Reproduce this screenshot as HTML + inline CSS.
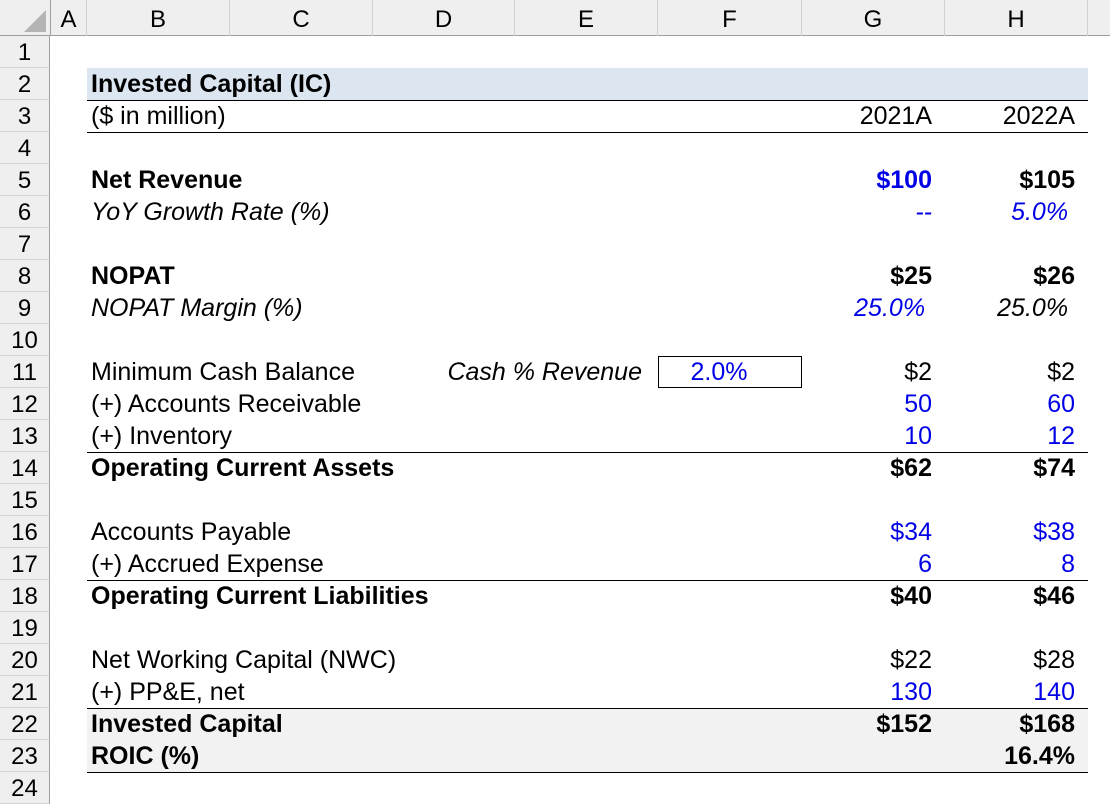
<!DOCTYPE html>
<html><head><style>
html,body{margin:0;width:1110px;height:808px;overflow:hidden}
body{background:#fff;font-family:"Liberation Sans",Arial,sans-serif;font-size:25px;color:#000;position:relative}
.a{position:absolute;line-height:32px;white-space:nowrap}
.hd{position:absolute;top:0;left:0;width:1110px;height:36px;background:#efefef;border-bottom:1px solid #9e9e9e;box-sizing:border-box}
.ch{position:absolute;top:0;height:36px;line-height:40px;text-align:center;border-right:1px solid #d0d0d0;box-sizing:border-box;font-size:24px}
.rh{position:absolute;left:0;width:50px;height:32px;line-height:34px;text-align:center;background:#efefef;border-bottom:1px solid #d4d4d4;border-right:1px solid #9e9e9e;box-sizing:border-box;font-size:24px}
.b{font-weight:bold}.i{font-style:italic}.bl{color:#0000e6}
.r{text-align:right}
.g{left:782px;width:150px;text-align:right}
.h{left:925px;width:150px;text-align:right}
.L{left:91px}
.ln{position:absolute;left:87px;width:1001px;height:1px;background:#000}
</style></head><body>
<div class="hd"></div>
<svg style="position:absolute;left:24px;top:10px" width="22" height="22"><polygon points="22,0 22,22 0,22" fill="#b4b4b4"/></svg>
<div class="ch" style="left:50px;width:37px;border-left:1px solid #9e9e9e">A</div>
<div class="ch" style="left:87px;width:143px">B</div>
<div class="ch" style="left:230px;width:143px">C</div>
<div class="ch" style="left:373px;width:142px">D</div>
<div class="ch" style="left:515px;width:143px">E</div>
<div class="ch" style="left:658px;width:144px">F</div>
<div class="ch" style="left:802px;width:143px">G</div>
<div class="ch" style="left:945px;width:143px">H</div>

<div style="position:absolute;left:87px;top:68px;width:1001px;height:32px;background:#dce6f1"></div>
<div style="position:absolute;left:87px;top:708px;width:1001px;height:64px;background:#f2f2f2"></div>
<div class="ln" style="top:100px"></div>
<div class="ln" style="top:132px"></div>
<div class="ln" style="top:452px"></div>
<div class="ln" style="top:580px"></div>
<div class="ln" style="top:708px"></div>
<div class="ln" style="top:772px"></div>
<div style="position:absolute;left:658px;top:356px;width:144px;height:32px;border:1px solid #000;box-sizing:border-box"></div>

<div class="rh" style="top:36px">1</div><div class="rh" style="top:68px">2</div><div class="rh" style="top:100px">3</div><div class="rh" style="top:132px">4</div><div class="rh" style="top:164px">5</div><div class="rh" style="top:196px">6</div><div class="rh" style="top:228px">7</div><div class="rh" style="top:260px">8</div><div class="rh" style="top:292px">9</div><div class="rh" style="top:324px">10</div><div class="rh" style="top:356px">11</div><div class="rh" style="top:388px">12</div><div class="rh" style="top:420px">13</div><div class="rh" style="top:452px">14</div><div class="rh" style="top:484px">15</div><div class="rh" style="top:516px">16</div><div class="rh" style="top:548px">17</div><div class="rh" style="top:580px">18</div><div class="rh" style="top:612px">19</div><div class="rh" style="top:644px">20</div><div class="rh" style="top:676px">21</div><div class="rh" style="top:708px">22</div><div class="rh" style="top:740px">23</div><div class="rh" style="top:772px">24</div>

<div class="a L b" style="top:68px">Invested Capital (IC)</div>
<div class="a L" style="top:100px">($ in million)</div>
<div class="a g" style="top:100px">2021A</div><div class="a h" style="top:100px">2022A</div>

<div class="a L b" style="top:164px">Net Revenue</div>
<div class="a g b bl" style="top:164px">$100</div><div class="a h b" style="top:164px">$105</div>
<div class="a L i" style="top:196px">YoY Growth Rate (%)</div>
<div class="a g i bl" style="top:196px">--</div><div class="a h i bl" style="top:196px">5.0%&nbsp;</div>

<div class="a L b" style="top:260px">NOPAT</div>
<div class="a g b" style="top:260px">$25</div><div class="a h b" style="top:260px">$26</div>
<div class="a L i" style="top:292px">NOPAT Margin (%)</div>
<div class="a g i bl" style="top:292px">25.0%&nbsp;</div><div class="a h i" style="top:292px">25.0%&nbsp;</div>

<div class="a L" style="top:356px">Minimum Cash Balance</div>
<div class="a i r" style="top:356px;left:380px;width:262px">Cash % Revenue</div>
<div class="a bl" style="top:356px;left:658px;width:122px;text-align:center">2.0%</div>
<div class="a g" style="top:356px">$2</div><div class="a h" style="top:356px">$2</div>
<div class="a L" style="top:388px">(+) Accounts Receivable</div>
<div class="a g bl" style="top:388px">50</div><div class="a h bl" style="top:388px">60</div>
<div class="a L" style="top:420px">(+) Inventory</div>
<div class="a g bl" style="top:420px">10</div><div class="a h bl" style="top:420px">12</div>
<div class="a L b" style="top:452px">Operating Current Assets</div>
<div class="a g b" style="top:452px">$62</div><div class="a h b" style="top:452px">$74</div>

<div class="a L" style="top:516px">Accounts Payable</div>
<div class="a g bl" style="top:516px">$34</div><div class="a h bl" style="top:516px">$38</div>
<div class="a L" style="top:548px">(+) Accrued Expense</div>
<div class="a g bl" style="top:548px">6</div><div class="a h bl" style="top:548px">8</div>
<div class="a L b" style="top:580px">Operating Current Liabilities</div>
<div class="a g b" style="top:580px">$40</div><div class="a h b" style="top:580px">$46</div>

<div class="a L" style="top:644px">Net Working Capital (NWC)</div>
<div class="a g" style="top:644px">$22</div><div class="a h" style="top:644px">$28</div>
<div class="a L" style="top:676px">(+) PP&amp;E, net</div>
<div class="a g bl" style="top:676px">130</div><div class="a h bl" style="top:676px">140</div>
<div class="a L b" style="top:708px">Invested Capital</div>
<div class="a g b" style="top:708px">$152</div><div class="a h b" style="top:708px">$168</div>
<div class="a L b" style="top:740px">ROIC (%)</div>
<div class="a h b" style="top:740px">16.4%</div>
</body></html>
